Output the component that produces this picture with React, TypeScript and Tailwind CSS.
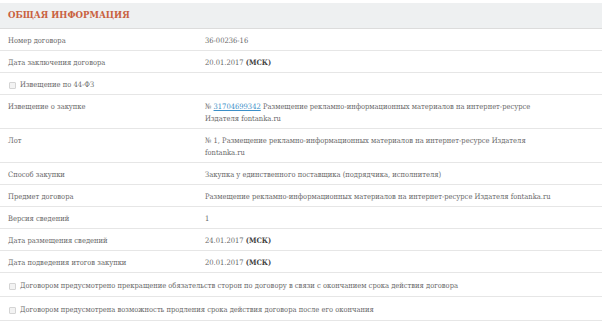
import React from "react";

const font = { fontFamily: '"DejaVu Serif", "Liberation Serif", serif', fontStretch: "condensed" as const };

function Row({ label, children }: { label: string; children?: React.ReactNode }) {
  return (
    <div className="flex border-b border-[#e6e6e6] pt-[6px] pb-[3px] leading-[12px]">
      <div className="w-[205px] shrink-0 pl-[8px]">{label}</div>
      <div className="flex-1 pr-2">{children}</div>
    </div>
  );
}

function CheckRow({ label, tall }: { label: string; tall?: boolean }) {
  return (
    <div
      className={
        tall
          ? "flex items-center gap-[4px] border-b border-[#e6e6e6] pt-[7px] pb-[4px] pl-[9px] leading-[12px]"
          : "flex items-center gap-[4px] border-b border-[#e6e6e6] pt-[6px] pb-[3px] pl-[9px] leading-[12px]"
      }
    >
      <span className="inline-block h-[7px] w-[7px] rounded-[1px] border border-[#d4d4d4] bg-[#f3f3f3]" />
      <span>{label}</span>
    </div>
  );
}

const Msk = () => <b className="font-bold text-[#444]">(МСК)</b>;

export default function App() {
  return (
    <div className="h-[323px] w-[604px] overflow-hidden bg-white pt-[3px] text-[7.5px] text-[#6a6a6a]" style={font}>
      <div className="mr-[2px]">
        <div className="flex h-[26px] items-center border-b border-[#dcdcdc] bg-[#eef0f1] pl-[8px] text-[9.5px] font-bold text-[#c9613f]">
          ОБЩАЯ ИНФОРМАЦИЯ
        </div>
        <Row label="Номер договора">36-00236-16</Row>
        <Row label="Дата заключения договора">
          20.01.2017 <Msk />
        </Row>
        <CheckRow label="Извещение по 44-ФЗ" />
        <Row label="Извещение о закупке">
          № <span className="text-[#3b8fc8] underline">31704699342</span> Размещение рекламно-информационных материалов на интернет-ресурсе
          <br />
          Издателя fontanka.ru
        </Row>
        <Row label="Лот">
          № 1, Размещение рекламно-информационных материалов на интернет-ресурсе Издателя
          <br />
          fontanka.ru
        </Row>
        <Row label="Способ закупки">Закупка у единственного поставщика (подрядчика, исполнителя)</Row>
        <Row label="Предмет договора">Размещение рекламно-информационных материалов на интернет-ресурсе Издателя fontanka.ru</Row>
        <Row label="Версия сведений">1</Row>
        <Row label="Дата размещения сведений">
          24.01.2017 <Msk />
        </Row>
        <Row label="Дата подведения итогов закупки">
          20.01.2017 <Msk />
        </Row>
        <CheckRow tall label="Договором предусмотрено прекращение обязательств сторон по договору в связи с окончанием срока действия договора" />
        <CheckRow tall label="Договором предусмотрена возможность продления срока действия договора после его окончания" />
      </div>
    </div>
  );
}
